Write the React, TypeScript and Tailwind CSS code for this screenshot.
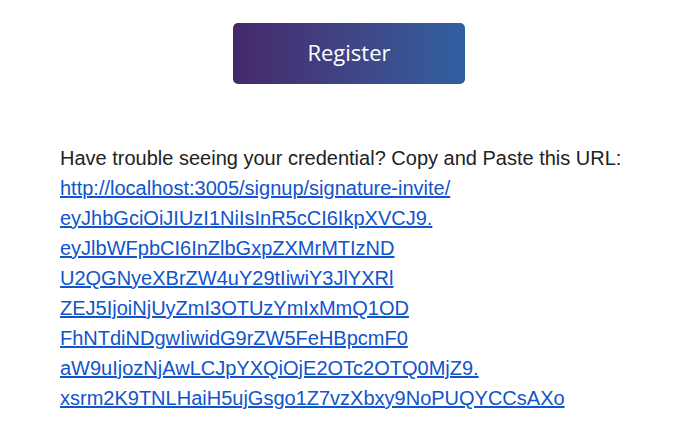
export default function App() {
  const token = [
    "eyJhbGciOiJIUzI1NiIsInR5cCI6IkpXVCJ9.",
    "eyJlbWFpbCI6InZlbGxpZXMrMTIzND",
    "U2QGNyeXBrZW4uY29tIiwiY3JlYXRl",
    "ZEJ5IjoiNjUyZmI3OTUzYmIxMmQ1OD",
    "FhNTdiNDgwIiwidG9rZW5FeHBpcmF0",
    "aW9uIjozNjAwLCJpYXQiOjE2OTc2OTQ0MjZ9.",
    "xsrm2K9TNLHaiH5ujGsgo1Z7vzXbxy9NoPUQYCCsAXo",
  ];
  const url = "http://localhost:3005/signup/signature-invite/" + token.join("");

  return (
    <div className="min-h-screen bg-white pt-[23px]">
      <div className="flex justify-center">
        <button className="w-[232px] h-[61px] rounded-[5px] bg-gradient-to-r from-[#44296b] to-[#2f60a0] text-white text-[22px] leading-[58px] pb-[3px] font-['Open_Sans',sans-serif]">
          Register
        </button>
      </div>
      <div className="mt-[59px] px-[60px] font-['Liberation_Sans',Arial,sans-serif] text-[20px] leading-[30px] text-[#222]">
        <p>Have trouble seeing your credential? Copy and Paste this URL:</p>
        <a href={url} className="text-[#1155cc] underline block">
          <span className="block">http://localhost:3005/signup/signature-invite/</span>
          {token.map((t) => (
            <span key={t} className="block">{t}</span>
          ))}
        </a>
      </div>
    </div>
  );
}
